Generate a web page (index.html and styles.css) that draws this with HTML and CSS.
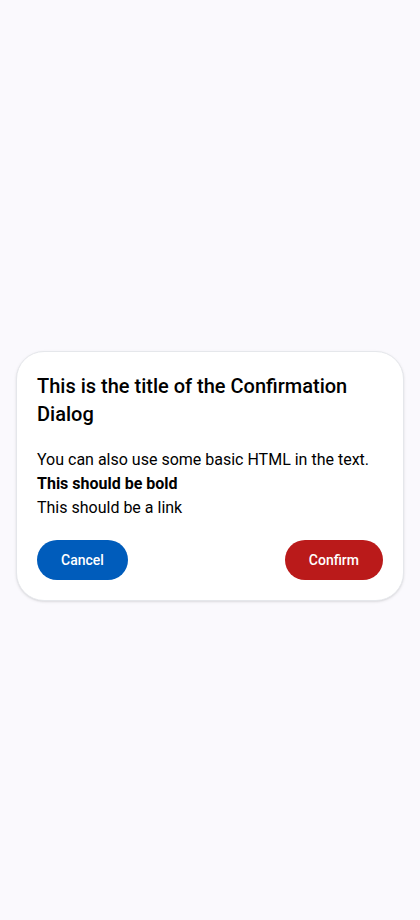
FILE: index.html
```html
<!DOCTYPE html>
<html lang="en">
<head>
<meta charset="utf-8">
<meta name="viewport" content="width=device-width, initial-scale=1">
<title>Confirmation Dialog</title>
<link rel="stylesheet" href="styles.css">
</head>
<body>
<main class="page">
  <section class="dialog" role="alertdialog" aria-labelledby="dialog-title" aria-describedby="dialog-text">
    <h1 class="dialog-title" id="dialog-title">This is the title of the Confirmation Dialog</h1>
    <p class="dialog-text" id="dialog-text">You can also use some basic HTML in the text.<br><b>This should be bold</b><br><a class="dialog-link" href="#">This should be a link</a></p>
    <div class="dialog-actions">
      <button class="button button-primary" type="button">Cancel</button>
      <button class="button button-danger" type="button">Confirm</button>
    </div>
  </section>
</main>
</body>
</html>
```
FILE: styles.css
```css
* {
  box-sizing: border-box;
}

body {
  margin: 0;
  background: #faf9fd;
  color: #000;
  font-family: Roboto, sans-serif;
  font-size: 16px;
  line-height: 24px;
}

.page {
  display: flex;
  align-items: center;
  justify-content: center;
  min-height: 100vh;
  padding: 32px 16px 0;
}

.dialog {
  width: 100%;
  max-width: 560px;
  padding: 20px;
  border: 1px solid #e5e7eb;
  border-radius: 28px;
  background: #fff;
  box-shadow: 0 1px 3px rgba(0, 0, 0, 0.1), 0 1px 2px -1px rgba(0, 0, 0, 0.1);
}

.dialog-title {
  margin: 0 0 20px;
  font-size: 20px;
  font-weight: 500;
  line-height: 28px;
}

.dialog-text {
  margin: 0 0 20px;
}

.dialog-link {
  color: inherit;
  text-decoration: none;
}

.dialog-actions {
  display: flex;
  justify-content: space-between;
  gap: 8px;
}

.button {
  height: 40px;
  padding: 0 24px;
  border: 0;
  border-radius: 20px;
  color: #fff;
  font: 500 14px/20px Roboto, sans-serif;
  cursor: pointer;
}

.button-primary {
  background: #005cbb;
}

.button-danger {
  background: #ba1a1a;
}
```
